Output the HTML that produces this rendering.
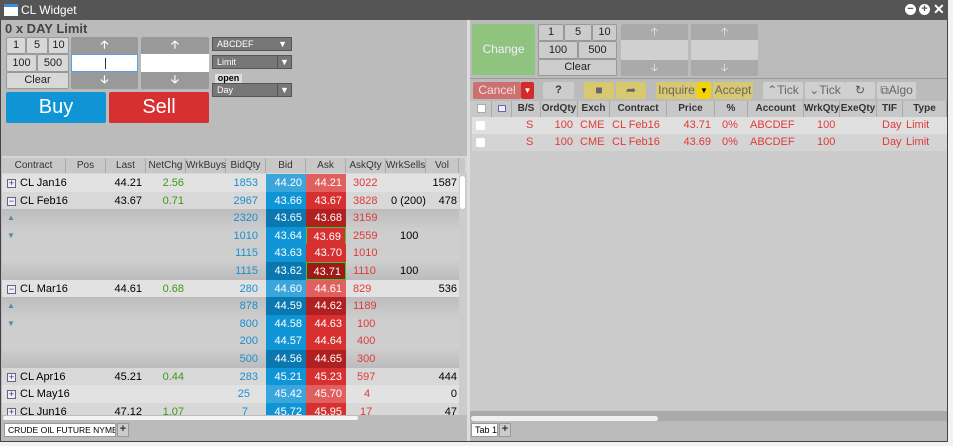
<!DOCTYPE html>
<html><head><meta charset="utf-8"><style>
*{box-sizing:border-box;margin:0;padding:0;white-space:nowrap}
body{width:953px;height:446px;background:#f2f2f2;font-family:"Liberation Sans",sans-serif;position:relative;overflow:hidden;font-size:11px}
.a{position:absolute}
.btn{position:absolute;background:#d8d8d8;border:1px solid #999;border-radius:2px;text-align:center;color:#222;font-size:11px}
.row{position:absolute;left:2px;width:457px;height:18px;font-size:11px}
.row div{position:absolute;top:0;height:18px;line-height:18px}
.r{text-align:right}
.h div{position:absolute;top:0;height:15px;line-height:15px;text-align:center;border-right:1px solid #aaa;color:#333;font-size:10px}
.g{color:#3a9a10}.b{color:#1a90d0}.red{color:#e03a3a}
.bid{left:264px;width:40px;background:#0f95d5;color:#fff;text-align:right;padding-right:4px}
.ask{left:304px;width:40px;background:#d63030;color:#fff;text-align:right;padding-right:4px}
.bl{background:#3aa6dc}.al{background:#e06060}
.dp{background:linear-gradient(#bdbdbd,#cdcdcd 30%,#cfcfcf 70%,#bcbcbc)}
.ex{width:9px;height:9px;border:1px solid #667;top:5px!important;height:9px!important;line-height:6px!important;font-size:9px;text-align:center;color:#335;background:#eef}
.o div{position:absolute;top:0;height:17px;line-height:17px;color:#e03a3a;font-size:11px}
.oh div{position:absolute;top:0;height:16px;line-height:16px;text-align:center;border-right:1px solid #aaa;color:#333;font-size:10px;font-weight:bold;background:#c8c8c8}
.tb{position:absolute;top:82px;height:17px;line-height:17px;text-align:center;font-size:12px;border-radius:2px}
</style></head><body>
<div class="a" style="left:0;top:0;width:948px;height:442px;background:#bbb;border:1px solid #444"></div>
<div class="a" style="left:0;top:0;width:948px;height:20px;background:#555"></div>
<div class="a" style="left:4px;top:4px;width:14px;height:12px;background:#fff;border-top:3px solid #3a8fd8"></div>
<div class="a" style="left:21px;top:3px;color:#fff;font-size:12px">CL Widget</div>
<div class="a" style="left:905px;top:4px;width:11px;height:11px;border-radius:50%;background:#fff;color:#555;font-size:11px;line-height:10px;text-align:center;font-weight:bold">−</div>
<div class="a" style="left:919px;top:4px;width:11px;height:11px;border-radius:50%;background:#fff;color:#555;font-size:11px;line-height:11px;text-align:center;font-weight:bold">+</div>
<div class="a" style="left:933px;top:1px;color:#fff;font-size:14px;font-weight:bold">✕</div>

<div class="a" style="left:5px;top:21px;font-size:13px;font-weight:bold;color:#444">0 x DAY Limit</div>
<div class="btn" style="left:6px;top:37px;width:20px;height:17px;line-height:15px">1</div>
<div class="btn" style="left:26px;top:37px;width:22px;height:17px;line-height:15px">5</div>
<div class="btn" style="left:48px;top:37px;width:21px;height:17px;line-height:15px">10</div>
<div class="btn" style="left:6px;top:54px;width:31px;height:18px;line-height:16px">100</div>
<div class="btn" style="left:37px;top:54px;width:32px;height:18px;line-height:16px">500</div>
<div class="btn" style="left:6px;top:72px;width:63px;height:17px;line-height:15px">Clear</div>
<div class="a" style="left:71px;top:37px;width:67px;height:52px;background:#999;border-radius:2px"></div>
<div class="a" style="left:71px;top:37px;width:67px;height:17px;color:#fff;text-align:center;font-weight:bold;line-height:17px">🡡</div>
<div class="a" style="left:71px;top:54px;width:67px;height:18px;background:#fff;border:1px solid #5a9fe8"><div class="a" style="left:33px;top:3px;width:1px;height:11px;background:#333"></div></div>
<div class="a" style="left:71px;top:72px;width:67px;height:17px;color:#fff;text-align:center;font-weight:bold;line-height:17px">🡣</div>
<div class="a" style="left:141px;top:37px;width:68px;height:52px;background:#999;border-radius:2px"></div>
<div class="a" style="left:141px;top:37px;width:68px;height:17px;color:#fff;text-align:center;font-weight:bold;line-height:17px">🡡</div>
<div class="a" style="left:141px;top:54px;width:68px;height:18px;background:#fff"></div>
<div class="a" style="left:141px;top:72px;width:68px;height:17px;color:#fff;text-align:center;font-weight:bold;line-height:17px">🡣</div>
<div class="a" style="left:212px;top:37px;width:80px;height:14px;background:#777;border:1px solid #555;color:#fff;font-size:9px;line-height:12px;padding-left:4px">ABCDEF<span style="position:absolute;right:4px">▼</span></div>
<div class="a" style="left:212px;top:55px;width:80px;height:14px;background:#777;border:1px solid #555;color:#fff;font-size:9px;line-height:12px;padding-left:4px">Limit<span style="position:absolute;right:0;width:14px;border-left:1px solid #555;text-align:center">▼</span></div>
<div class="a" style="left:215px;top:74px;width:27px;height:9px;background:#ddd;font-size:9px;line-height:9px;text-align:center;font-weight:bold">open</div>
<div class="a" style="left:212px;top:83px;width:80px;height:14px;background:#777;border:1px solid #555;color:#fff;font-size:9px;line-height:12px;padding-left:4px">Day<span style="position:absolute;right:0;width:14px;border-left:1px solid #555;text-align:center">▼</span></div>
<div class="a" style="left:6px;top:92px;width:100px;height:31px;background:#0f95d5;border-radius:2px;color:#fff;font-size:20px;text-align:center;line-height:31px">Buy</div>
<div class="a" style="left:109px;top:92px;width:100px;height:31px;background:#d63030;border-radius:2px;color:#fff;font-size:20px;text-align:center;line-height:31px">Sell</div>

<div class="a" style="left:2px;top:156px;width:465px;height:265px;background:#d6d6d6"></div>
<div class="row h" style="top:158px;height:15px;background:#c8c8c8;width:463px">
<div style="left:0;width:64px">Contract</div><div style="left:64px;width:40px">Pos</div><div style="left:104px;width:40px">Last</div><div style="left:144px;width:40px">NetChg</div><div style="left:184px;width:40px">WrkBuys</div><div style="left:224px;width:40px">BidQty</div><div style="left:264px;width:40px">Bid</div><div style="left:304px;width:40px">Ask</div><div style="left:344px;width:40px">AskQty</div><div style="left:384px;width:40px">WrkSells</div><div style="left:424px;width:33px">Vol</div></div>

<div class="row" style="top:174px;background:#e2e2e2"><div class="ex" style="left:5px">+</div><div style="left:18px">CL Jan16</div><div class="r" style="left:104px;width:36px">44.21</div><div class="g r" style="left:144px;width:38px">2.56</div><div class="b r" style="left:224px;width:32px">1853</div><div class="bid bl">44.20</div><div class="ask al">44.21</div><div class="red" style="left:351px">3022</div><div class="r" style="left:424px;width:31px">1587</div></div>
<div class="row" style="top:191.6px;background:#d8d8d8"><div class="ex" style="left:5px">−</div><div style="left:18px">CL Feb16</div><div class="r" style="left:104px;width:36px">43.67</div><div class="g r" style="left:144px;width:38px">0.71</div><div class="b r" style="left:224px;width:32px">2967</div><div class="bid">43.66</div><div class="ask">43.67</div><div class="red" style="left:351px">3828</div><div style="left:389px">0 (200)</div><div class="r" style="left:424px;width:31px">478</div></div>
<div class="row dp" style="top:209.2px;height:70.4px"></div>
<div class="row" style="top:209.2px"><div style="left:5px;color:#58a;font-size:8px">▲</div><div class="b r" style="left:224px;width:32px">2320</div><div class="bid" style="background:#0a78b0">43.65</div><div class="ask" style="background:#b02020">43.68</div><div class="red" style="left:351px">3159</div></div>
<div class="row" style="top:226.8px"><div style="left:5px;color:#58a;font-size:8px">▼</div><div class="b r" style="left:224px;width:32px">1010</div><div class="bid">43.64</div><div class="ask" style="border:1px solid #3c3">43.69</div><div class="red" style="left:351px">2559</div><div style="left:398px">100</div></div>
<div class="row" style="top:244.4px"><div class="b r" style="left:224px;width:32px">1115</div><div class="bid">43.63</div><div class="ask">43.70</div><div class="red" style="left:351px">1010</div></div>
<div class="row" style="top:262px"><div class="b r" style="left:224px;width:32px">1115</div><div class="bid" style="background:#0a78b0">43.62</div><div class="ask" style="background:#a01818;border:1px solid #3c3">43.71</div><div class="red" style="left:351px">1110</div><div style="left:398px">100</div></div>
<div class="row" style="top:279.6px;background:#e2e2e2"><div class="ex" style="left:5px">−</div><div style="left:18px">CL Mar16</div><div class="r" style="left:104px;width:36px">44.61</div><div class="g r" style="left:144px;width:38px">0.68</div><div class="b r" style="left:224px;width:32px">280</div><div class="bid bl">44.60</div><div class="ask al">44.61</div><div class="red" style="left:351px">829</div><div class="r" style="left:424px;width:31px">536</div></div>
<div class="row dp" style="top:297.2px;height:70.4px"></div>
<div class="row" style="top:297.2px"><div style="left:5px;color:#58a;font-size:8px">▲</div><div class="b r" style="left:224px;width:32px">878</div><div class="bid" style="background:#0a78b0">44.59</div><div class="ask" style="background:#b02020">44.62</div><div class="red" style="left:351px">1189</div></div>
<div class="row" style="top:314.8px"><div style="left:5px;color:#58a;font-size:8px">▼</div><div class="b r" style="left:224px;width:32px">800</div><div class="bid">44.58</div><div class="ask">44.63</div><div class="red" style="left:355px">100</div></div>
<div class="row" style="top:332.4px"><div class="b r" style="left:224px;width:32px">200</div><div class="bid">44.57</div><div class="ask">44.64</div><div class="red" style="left:355px">400</div></div>
<div class="row" style="top:350px"><div class="b r" style="left:224px;width:32px">500</div><div class="bid" style="background:#0a78b0">44.56</div><div class="ask" style="background:#b02020">44.65</div><div class="red" style="left:355px">300</div></div>
<div class="row" style="top:367.6px;background:#d8d8d8"><div class="ex" style="left:5px">+</div><div style="left:18px">CL Apr16</div><div class="r" style="left:104px;width:36px">45.21</div><div class="g r" style="left:144px;width:38px">0.44</div><div class="b r" style="left:224px;width:32px">283</div><div class="bid">45.21</div><div class="ask">45.23</div><div class="red" style="left:355px">597</div><div class="r" style="left:424px;width:31px">444</div></div>
<div class="row" style="top:385.2px;background:#e2e2e2"><div class="ex" style="left:5px">+</div><div style="left:18px">CL May16</div><div class="b r" style="left:224px;width:24px">25</div><div class="bid bl">45.42</div><div class="ask al">45.70</div><div class="red" style="left:362px">4</div><div class="r" style="left:424px;width:31px">0</div></div>
<div class="row" style="top:402.8px;height:12px;overflow:hidden;background:#d8d8d8"><div class="ex" style="left:5px">+</div><div style="left:18px">CL Jun16</div><div class="r" style="left:104px;width:36px">47.12</div><div class="g r" style="left:144px;width:38px">1.07</div><div class="b r" style="left:224px;width:22px">7</div><div class="bid">45.72</div><div class="ask">45.95</div><div class="red" style="left:358px">17</div><div class="r" style="left:424px;width:31px">47</div></div>
<div class="a" style="left:459px;top:173px;width:8px;height:242px;background:#ccc"></div>
<div class="a" style="left:460px;top:176px;width:5px;height:33px;background:#fff;border-radius:3px"></div>
<div class="a" style="left:2px;top:415px;width:465px;height:6px;background:#bbb"></div>
<div class="a" style="left:3px;top:416px;width:355px;height:4px;background:#f4f4f4;border-radius:3px"></div>
<div class="a" style="left:4px;top:423px;width:112px;height:14px;background:#fff;border:1px solid #999;font-size:8.5px;line-height:12px;padding-left:3px;overflow:hidden">CRUDE OIL FUTURE NYMEX</div>
<div class="a" style="left:117px;top:423px;width:12px;height:14px;background:#ccc;border:1px solid #999;font-size:11px;line-height:11px;text-align:center;font-weight:bold;color:#333">+</div>
<div class="a" style="left:467px;top:20px;width:3px;height:421px;background:#ddd"></div>

<div class="a" style="left:472px;top:24px;width:63px;height:51px;background:#8fc47f;border-radius:2px;color:#eef;font-size:12px;text-align:center;line-height:51px">Change</div>
<div class="btn" style="left:538px;top:24px;width:26px;height:17px;line-height:15px;background:#ccc">1</div>
<div class="btn" style="left:564px;top:24px;width:28px;height:17px;line-height:15px;background:#ccc">5</div>
<div class="btn" style="left:592px;top:24px;width:25px;height:17px;line-height:15px;background:#ccc">10</div>
<div class="btn" style="left:538px;top:41px;width:40px;height:18px;line-height:16px;background:#ccc">100</div>
<div class="btn" style="left:578px;top:41px;width:39px;height:18px;line-height:16px;background:#ccc">500</div>
<div class="btn" style="left:538px;top:59px;width:79px;height:17px;line-height:15px;background:#ccc">Clear</div>
<div class="a" style="left:621px;top:24px;width:67px;height:52px;background:#aaa;border-radius:2px"></div>
<div class="a" style="left:621px;top:24px;width:67px;height:16px;color:#eee;text-align:center;line-height:16px">🡡</div>
<div class="a" style="left:621px;top:40px;width:67px;height:20px;background:#d0d0d0"></div>
<div class="a" style="left:621px;top:60px;width:67px;height:16px;color:#eee;text-align:center;line-height:16px">🡣</div>
<div class="a" style="left:691px;top:24px;width:67px;height:52px;background:#aaa;border-radius:2px"></div>
<div class="a" style="left:691px;top:24px;width:67px;height:16px;color:#eee;text-align:center;line-height:16px">🡡</div>
<div class="a" style="left:691px;top:40px;width:67px;height:20px;background:#d0d0d0"></div>
<div class="a" style="left:691px;top:60px;width:67px;height:16px;color:#eee;text-align:center;line-height:16px">🡣</div>
<div class="a" style="left:470px;top:78px;width:477px;height:1px;background:#999"></div>

<div class="tb" style="left:473px;width:48px;background:#cc7070;color:#f4dede">Cancel</div>
<div class="tb" style="left:521px;width:13px;background:#d62a2a;color:#fff;font-size:8px">▼</div>
<div class="tb" style="left:543px;width:31px;background:#ccc;color:#333;font-size:11px;font-weight:bold">?</div>
<div class="tb" style="left:584px;width:30px;background:#d8c870;color:#666">■</div>
<div class="tb" style="left:616px;width:30px;background:#d8c870;color:#666">➦</div>
<div class="tb" style="left:656px;width:41px;background:#d8c870;color:#666">Inquire</div>
<div class="tb" style="left:697px;width:14px;background:#f2d400;color:#000;font-size:8px">▼</div>
<div class="tb" style="left:713px;width:40px;background:#d8c870;color:#666">Accept</div>
<div class="tb" style="left:763px;width:40px;background:#d0d0d0;color:#666">⌃Tick</div>
<div class="tb" style="left:805px;width:40px;background:#d0d0d0;color:#666">⌄Tick</div>
<div class="tb" style="left:845px;width:30px;background:#d0d0d0;color:#555">↻</div>
<div class="tb" style="left:877px;width:39px;background:#d0d0d0;color:#666">⧉Algo</div>

<div class="a" style="left:470px;top:101px;width:477px;height:310px;background:#cbcbcb"></div>
<div class="a oh" style="left:472px;top:101px;width:475px;height:16px">
<div style="left:0;width:20px"><span style="display:inline-block;width:9px;height:9px;background:#fff;border:1px solid #aaa;margin-top:3px"></span></div>
<div style="left:20px;width:20px"><span style="display:inline-block;width:8px;height:7px;background:#eef;border:1px solid #66a;margin-top:4px"></span></div>
<div style="left:40px;width:29px">B/S</div><div style="left:69px;width:37px">OrdQty</div><div style="left:106px;width:32px">Exch</div><div style="left:138px;width:57px">Contract</div><div style="left:195px;width:48px">Price</div><div style="left:243px;width:33px">%</div><div style="left:276px;width:56px">Account</div><div style="left:332px;width:36px">WrkQty</div><div style="left:368px;width:37px">ExeQty</div><div style="left:405px;width:26px">TIF</div><div style="left:431px;width:44px">Type</div></div>
<div class="a o" style="left:472px;top:117px;width:475px;height:17px;background:#e0e0e0"><div style="left:4px;top:4px;width:9px;height:9px;background:#fff;border-radius:2px"></div><div style="left:54px">S</div><div style="left:74px;width:27px;text-align:right">100</div><div style="left:108px">CME</div><div style="left:140px">CL Feb16</div><div style="left:195px;width:44px;text-align:right">43.71</div><div style="left:250px">0%</div><div style="left:278px">ABCDEF</div><div style="left:345px">100</div><div style="left:410px">Day</div><div style="left:434px">Limit</div></div>
<div class="a o" style="left:472px;top:134px;width:475px;height:17px;background:#d4d4d4"><div style="left:4px;top:4px;width:9px;height:9px;background:#fff;border-radius:2px"></div><div style="left:54px">S</div><div style="left:74px;width:27px;text-align:right">100</div><div style="left:108px">CME</div><div style="left:140px">CL Feb16</div><div style="left:195px;width:44px;text-align:right">43.69</div><div style="left:250px">0%</div><div style="left:278px">ABCDEF</div><div style="left:345px">100</div><div style="left:410px">Day</div><div style="left:434px">Limit</div></div>
<div class="a" style="left:470px;top:411px;width:477px;height:10px;background:#aaa"></div>
<div class="a" style="left:471px;top:416px;width:187px;height:5px;background:#f0f0f0;border-radius:3px"></div>
<div class="a" style="left:471px;top:423px;width:27px;height:14px;background:#fff;border:1px solid #999;font-size:9px;line-height:12px;padding-left:3px">Tab 1</div>
<div class="a" style="left:499px;top:423px;width:12px;height:14px;background:#ccc;border:1px solid #999;font-size:11px;line-height:11px;text-align:center;font-weight:bold;color:#333">+</div>
</body></html>
